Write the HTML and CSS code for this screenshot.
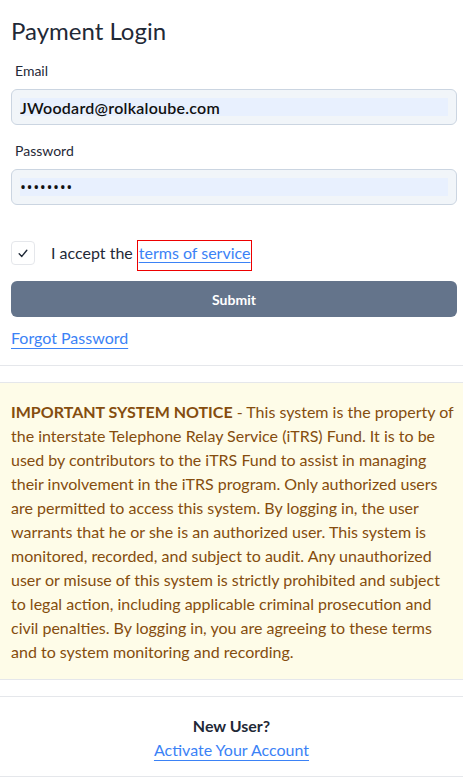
FILE: index.html
```html
<!DOCTYPE html>
<html lang="en">
<head>
<meta charset="utf-8">
<title>Payment Login</title>
<link rel="stylesheet" href="styles.css">
</head>
<body>
<main class="page">
  <section class="login">
    <h1 class="title">Payment Login</h1>
    <form class="form">
      <label class="label" for="email">Email</label>
      <input class="field field-email" id="email" type="text" value="JWoodard@rolkaloube.com">
      <label class="label label-pw" for="pw">Password</label>
      <input class="field field-pw" id="pw" type="password" value="password">
      <div class="accept">
        <span class="check">
          <svg width="10" height="9" viewBox="0 0 10 9"><path d="M1.2 4.8 L3.8 7.4 L8.8 1.2" fill="none" stroke="#1f2937" stroke-width="1.4" stroke-linecap="round" stroke-linejoin="round"/></svg>
        </span>
        <span class="accept-text">I accept the</span>
        <a class="tos" href="#">terms of service</a>
      </div>
      <button class="submit" type="button">Submit</button>
      <a class="link forgot" href="#">Forgot Password</a>
    </form>
  </section>
  <hr class="rule">
  <section class="notice">
    <p class="notice-text"><strong>IMPORTANT SYSTEM NOTICE</strong> - This system is the property of the interstate Telephone Relay Service (iTRS) Fund. It is to be used by contributors to the iTRS Fund to assist in managing their involvement in the iTRS program. Only authorized users are permitted to access this system. By logging in, the user warrants that he or she is an authorized user. This system is monitored, recorded, and subject to audit. Any unauthorized user or misuse of this system is strictly prohibited and subject to legal action, including applicable criminal prosecution and civil penalties. By logging in, you are agreeing to these terms and to system monitoring and recording.</p>
  </section>
  <section class="newuser">
    <div class="newuser-title">New User?</div>
    <a class="link" href="#">Activate Your Account</a>
  </section>
</main>
</body>
</html>
```
FILE: styles.css
```css
* { box-sizing: border-box; }
html, body { margin: 0; padding: 0; background: #fff; }
body {
  font-family: Lato, "Open Sans", sans-serif;
  color: #1f2937;
  font-size: 16px;
  line-height: 24px;
}
.page { width: 463px; }
.login { padding: 15px 6px 0 11px; }
.title {
  margin: 0;
  font-size: 24px;
  line-height: 32px;
  font-weight: 400;
  color: #1f2937;
}
.form { display: flex; flex-direction: column; align-items: flex-start; margin-top: 14px; }
.label {
  font-size: 14px;
  line-height: 20px;
  padding-left: 4px;
  margin-bottom: 8px;
}
.label-pw { margin-top: 16px; }
.field {
  width: 100%;
  height: 36px;
  border: 1px solid #cbd5e1;
  border-radius: 6px;
  padding: 8px;
  font-family: inherit;
  font-size: 16px;
  line-height: 18px;
  color: #111;
  font-weight: 600;
  letter-spacing: 0.25px;
  background: linear-gradient(#e8f0fe, #e8f0fe) content-box no-repeat, #f1f5f9;
  outline: none;
}
.field-pw { font-family: "Open Sans", sans-serif; font-weight: 400; letter-spacing: 0.6px; }
.accept {
  display: flex;
  align-items: flex-start;
  margin-top: 35px;
  height: 31px;
}
.check {
  width: 24px;
  height: 24px;
  border: 1px solid #e5e7eb;
  border-radius: 4px;
  display: flex;
  align-items: center;
  justify-content: center;
  margin-top: 1px;
}
.accept-text { margin: 1px 4px 0 16px; font-size: 16px; }
.tos {
  display: block;
  color: #3b82f6;
  text-decoration: underline;
  text-underline-offset: 3px;
  border: 1px solid #e00;
  padding: 0 1px 5px 1px;
}
.submit {
  margin-top: 10px;
  width: 100%;
  height: 36px;
  border: 0;
  border-radius: 6px;
  background: #64748b;
  color: #fff;
  font-family: inherit;
  font-weight: 700;
  font-size: 14px;
}
.link {
  color: #3b82f6;
  text-decoration: underline;
  text-underline-offset: 4px;
}
.forgot { margin-top: 9px; }
.rule {
  margin: 15px 0 0 0;
  border: 0;
  border-top: 1px solid #e5e7eb;
  height: 0;
}
.notice {
  margin-top: 16px;
  background: #fefce8;
  border-top: 1px solid #e5e7eb;
  border-bottom: 1px solid #e5e7eb;
  padding: 17px 6px 15px 11px;
}
.notice-text { margin: 0; color: #854d0e; }
.notice-text strong { font-weight: 700; }
.newuser {
  margin-top: 16px;
  border-top: 1px solid #e5e7eb;
  border-bottom: 1px solid #e5e7eb;
  padding: 17px 0 14px;
  display: flex;
  flex-direction: column;
  align-items: center;
}
.newuser-title { font-weight: 700; }
```
